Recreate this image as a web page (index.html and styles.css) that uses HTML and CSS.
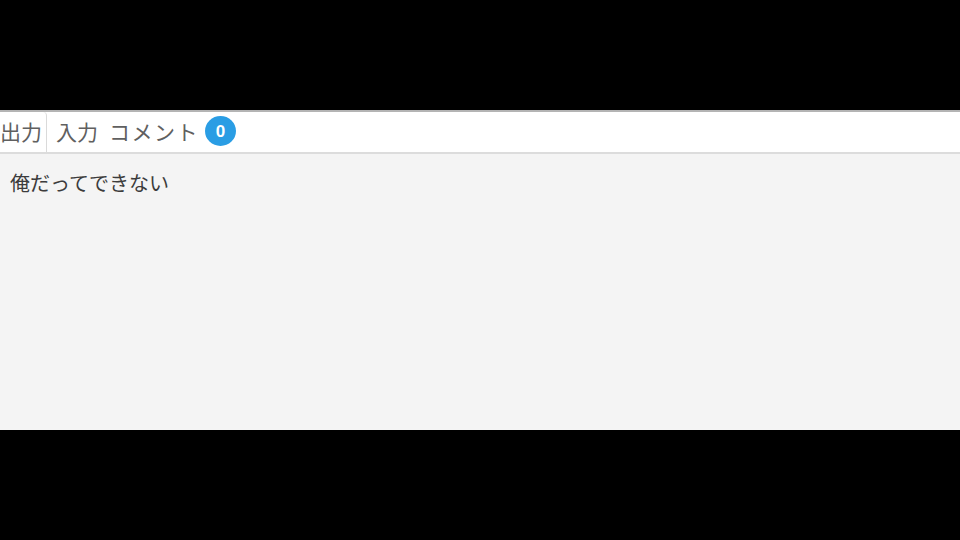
FILE: index.html
```html
<!DOCTYPE html>
<html lang="ja">
<head>
<meta charset="utf-8">
<link rel="stylesheet" href="styles.css">
</head>
<body>
<div class="screen">
  <div class="panel">
    <div class="tabs">
      <div class="tab active">出力</div>
      <div class="tab">入力</div>
      <div class="tab">コメント<span class="badge">0</span></div>
    </div>
    <div class="content">俺だってできない</div>
  </div>
</div>
</body>
</html>
```
FILE: styles.css
```css
html, body {
  margin: 0;
  padding: 0;
  background: #000;
}
.screen {
  width: 960px;
  height: 540px;
  padding-top: 110px;
  box-sizing: border-box;
  overflow: hidden;
}
.panel {
  height: 320px;
  display: flex;
  flex-direction: column;
  background: #f4f4f4;
}
.tabs {
  display: flex;
  align-items: stretch;
  height: 40px;
  background: #fff;
  border-top: 2px solid #b4b4b4;
  border-bottom: 2px solid #dcdcdc;
  font-family: "Noto Sans CJK JP", "Liberation Sans", sans-serif;
  font-size: 21px;
  color: #606060;
}
.tab {
  display: flex;
  align-items: center;
  padding: 0 0 2px 9px;
  line-height: 1;
}
.tab.active {
  padding: 0 4px 2px 0;
  border-right: 1px solid #dadada;
  border-top-right-radius: 4px;
}
.tab + .tab + .tab {
  padding-left: 11px;
  letter-spacing: 1.5px;
}
.badge {
  display: inline-flex;
  align-items: center;
  justify-content: center;
  width: 31px;
  height: 30px;
  margin-left: 6px;
  border-radius: 50%;
  background: #2a9de4;
  color: #fff;
  font-family: "Liberation Sans", sans-serif;
  font-weight: bold;
  font-size: 17px;
  letter-spacing: 0;
}
.content {
  flex: 1;
  padding: 15px 10px;
  font-family: "Noto Sans CJK JP", "Liberation Sans", sans-serif;
  font-size: 20px;
  line-height: 28px;
  color: #3c3c3c;
}
```
